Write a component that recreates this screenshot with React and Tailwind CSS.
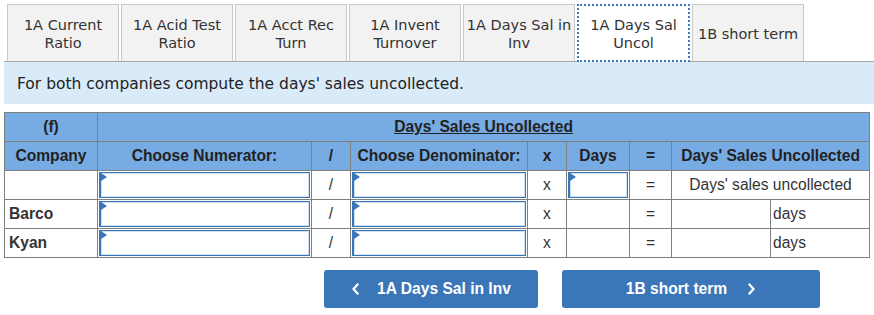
import React from 'react'

const TABS = [
  ['1A Current', 'Ratio'],
  ['1A Acid Test', 'Ratio'],
  ['1A Acct Rec', 'Turn'],
  ['1A Invent', 'Turnover'],
  ['1A Days Sal in', 'Inv'],
  ['1A Days Sal', 'Uncol'],
  ['1B short term'],
]
const ACTIVE = 5

const ROWS = [
  { name: '', days: true, result: "Days' sales uncollected" },
  { name: 'Barco', days: false },
  { name: 'Kyan', days: false },
]

function Picker() {
  return (
    <div className="relative h-[26px] w-full border border-[#3a75b8] border-l-2 bg-white shadow-[inset_0_0_0_1px_#cfe0f3]">
      <span className="absolute left-0 top-0 h-0 w-0 border-y-[4px] border-l-[6px] border-y-transparent border-l-[#3a75b8]" />
    </div>
  )
}

function Chevron({ dir }) {
  return (
    <svg width="9" height="14" viewBox="0 0 9 14" fill="none" stroke="white" strokeWidth="2.2" strokeLinecap="square">
      {dir === 'left' ? <polyline points="6.5,2.5 2.5,7 6.5,11.5" /> : <polyline points="2.5,2.5 6.5,7 2.5,11.5" />}
    </svg>
  )
}

export default function App() {
  const th = 'border border-[#7f7f7f] bg-[#77abe3] font-bold text-[#222] text-[15.6px] h-[29px] p-0 px-1'
  const td = 'border border-[#7f7f7f] h-[29px] text-[15.6px] text-[#333]'

  return (
    <div className="w-[874px] h-[315px] bg-white pl-[4px] pt-[4px]">
      <div className="w-[870px] flex gap-[2px] pl-[3px] border-b border-[#a9a9a9] h-[58px]">
        {TABS.map((t, i) => (
          i === ACTIVE ? (
            <div key={i} className="relative z-10 w-[113px] h-[58px] bg-white border-2 border-dotted border-[#3b78c4] flex flex-col items-center justify-center pt-[1px] text-[14.5px] leading-[18px] text-[#333] font-['DejaVu_Sans',sans-serif]">
              {t.map(l => <span key={l}>{l}</span>)}
            </div>
          ) : (
            <div key={i} className="w-[112px] h-[57px] bg-[#f2f2f2] border border-b-0 border-[#c8c8c8] flex flex-col items-center justify-center pt-[1px] text-[14.5px] leading-[18px] text-[#333] font-['DejaVu_Sans',sans-serif]">
              {t.map(l => <span key={l}>{l}</span>)}
            </div>
          )
        ))}
      </div>

      <div className="w-[870px] h-[42px] bg-[#d9eaf9] flex items-center pl-[13px] pt-[3px] text-[15.5px] text-[#222] font-['DejaVu_Sans',sans-serif]">
        For both companies compute the days' sales uncollected.
      </div>

      <table className="mt-[8px] w-[865px] table-fixed border-collapse border border-[#7f7f7f] font-['Liberation_Sans',Arial,sans-serif]">
        <colgroup>
          <col className="w-[93px]" />
          <col className="w-[214px]" />
          <col className="w-[39px]" />
          <col className="w-[177px]" />
          <col className="w-[39px]" />
          <col className="w-[63px]" />
          <col className="w-[42px]" />
          <col className="w-[99px]" />
          <col className="w-[99px]" />
        </colgroup>
        <thead>
          <tr>
            <th className={th}>(f)</th>
            <th colSpan={8} className={th}><span className="underline">Days' Sales Uncollected</span></th>
          </tr>
          <tr>
            <th className={th}>Company</th>
            <th className={th}>Choose Numerator:</th>
            <th className={th}>/</th>
            <th className={th}>Choose Denominator:</th>
            <th className={th}>x</th>
            <th className={th}>Days</th>
            <th className={th}>=</th>
            <th colSpan={2} className={th}>Days' Sales Uncollected</th>
          </tr>
        </thead>
        <tbody>
          {ROWS.map(r => (
            <tr key={r.name || 'label'}>
              <td className={`${td} px-[4px] font-bold text-[#222]`}>{r.name}</td>
              <td className={`${td} p-[1px]`}><Picker /></td>
              <td className={`${td} text-center`}>/</td>
              <td className={`${td} p-[1px]`}><Picker /></td>
              <td className={`${td} text-center`}>x</td>
              <td className={`${td} p-[1px]`}>{r.days && <Picker />}</td>
              <td className={`${td} text-center`}>=</td>
              {r.result ? (
                <td colSpan={2} className={`${td} text-center`}>{r.result}</td>
              ) : (
                <>
                  <td className={td}></td>
                  <td className={`${td} px-[2px]`}>days</td>
                </>
              )}
            </tr>
          ))}
        </tbody>
      </table>

      <div className="mt-[12px] ml-[320px] flex gap-[24px] font-['Liberation_Sans',Arial,sans-serif]">
        <button className="w-[214px] h-[38px] rounded-[3px] bg-[#3a76b8] text-white text-[15.6px] font-bold flex items-center justify-center gap-[17px]">
          <Chevron dir="left" />
          <span>1A Days Sal in Inv</span>
        </button>
        <button className="w-[258px] h-[38px] rounded-[3px] bg-[#3a76b8] text-white text-[15.6px] font-bold flex items-center justify-center gap-[20px]">
          <span>1B short term</span>
          <Chevron dir="right" />
        </button>
      </div>
    </div>
  )
}
